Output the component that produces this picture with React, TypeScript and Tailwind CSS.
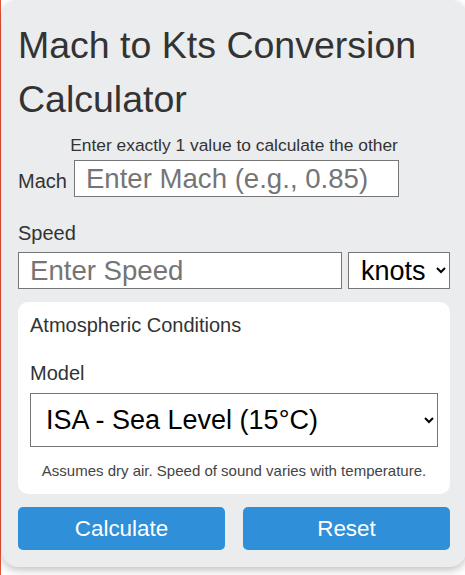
import React, { useState } from "react";

const App = () => {
  const [mach, setMach] = useState("");
  const [speed, setSpeed] = useState("");
  const [unit, setUnit] = useState("knots");
  const [model, setModel] = useState("isa");

  const reset = () => {
    setMach("");
    setSpeed("");
  };

  return (
    <div className="min-h-screen bg-white border-l border-[#e5533d] font-['Liberation_Sans',Arial,sans-serif] text-[#333]">
      <div className="ml-px w-[464px] rounded-[16px] bg-[#ebeced] shadow-[0_3px_8px_rgba(0,0,0,0.25)] px-4 pt-[18px] pb-[17px]">
        <h1 className="text-[37.5px] leading-[54px] font-normal">Mach to Kts Conversion Calculator</h1>

        <p className="mt-[10px] text-center text-[17.4px] leading-[18px]">Enter exactly 1 value to calculate the other</p>

        {/* Mach */}
        <div className="mt-[6px] flex items-baseline gap-[7px]">
          <label htmlFor="mach" className="text-[20px] leading-[23px]">
            Mach
          </label>
          <input
            id="mach"
            type="text"
            value={mach}
            onChange={(e) => setMach(e.target.value)}
            placeholder="Enter Mach (e.g., 0.85)"
            className="h-[37px] w-[325px] border border-[#767676] bg-white pl-[11px] pr-2 text-[27.6px] text-black placeholder:text-[#757575] outline-none"
          />
        </div>

        {/* Speed */}
        <label htmlFor="speed" className="mt-[25px] block text-[20px] leading-[23px]">
          Speed
        </label>
        <div className="mt-[7px] flex gap-[6px]">
          <input
            id="speed"
            type="text"
            value={speed}
            onChange={(e) => setSpeed(e.target.value)}
            placeholder="Enter Speed"
            className="h-[37px] min-w-0 flex-1 border border-[#767676] bg-white pl-[11px] pr-2 text-[27.6px] text-black placeholder:text-[#757575] outline-none"
          />
          <select
            value={unit}
            onChange={(e) => setUnit(e.target.value)}
            className="h-[37px] w-[102px] border border-[#767676] bg-white pl-2 text-[27px] text-black outline-none"
          >
            <option value="knots">knots</option>
            <option value="mph">mph</option>
            <option value="kmh">km/h</option>
          </select>
        </div>

        {/* Atmospheric Conditions */}
        <div className="mt-[13px] rounded-[10px] bg-white px-3 pt-3 pb-[15px]">
          <h3 className="text-[20px] leading-[23px] font-normal">Atmospheric Conditions</h3>
          <label htmlFor="model" className="mt-[25px] block text-[20px] leading-[23px]">
            Model
          </label>
          <select
            id="model"
            value={model}
            onChange={(e) => setModel(e.target.value)}
            className="mt-2 h-[54px] w-full border border-[#767676] bg-white pl-[11px] text-[27px] text-black outline-none"
          >
            <option value="isa">ISA - Sea Level (15°C)</option>
            <option value="custom">Custom Temperature</option>
          </select>
          <p className="mt-4 text-center text-[15px] leading-4 text-[#444]">
            Assumes dry air. Speed of sound varies with temperature.
          </p>
        </div>

        {/* Buttons */}
        <div className="mt-[13px] grid grid-cols-2 gap-[18px]">
          <button className="h-[43px] rounded-[5px] bg-[#2f8fd8] text-[22.4px] text-white">Calculate</button>
          <button onClick={reset} className="h-[43px] rounded-[5px] bg-[#2f8fd8] text-[22.4px] text-white">
            Reset
          </button>
        </div>
      </div>
    </div>
  );
};

export default App;
